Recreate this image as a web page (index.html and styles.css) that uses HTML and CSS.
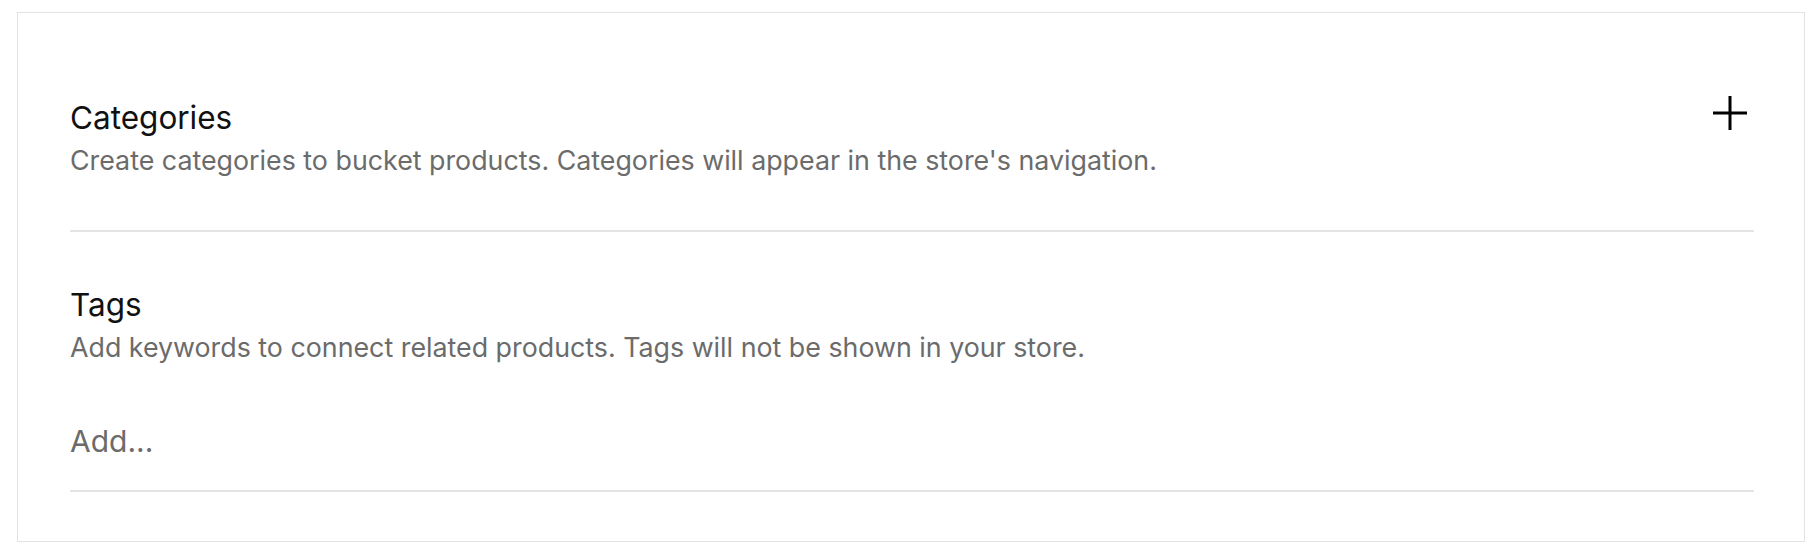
FILE: index.html
```html
<!DOCTYPE html>
<html lang="en">
<head>
    <meta charset="UTF-8">
    <title>Product organization</title>
    <link rel="stylesheet" href="styles.css">
</head>
<body>
    <div class="panel">
        <div class="section">
            <div class="section-head">
                <div class="section-text">
                    <div class="title">Categories</div>
                    <div class="desc">Create categories to bucket products. Categories will appear in the store's navigation.</div>
                </div>
                <button class="add-btn" type="button" aria-label="Add category">
                    <svg width="36" height="36" viewBox="0 0 36 36">
                        <path d="M18 1v34M1 18h34" stroke="#000" stroke-width="3" fill="none"/>
                    </svg>
                </button>
            </div>
        </div>

        <div class="section tags">
            <div class="title">Tags</div>
            <div class="desc">Add keywords to connect related products. Tags will not be shown in your store.</div>
            <input class="tag-input" type="text" placeholder="Add...">
        </div>
    </div>
</body>
</html>
```

FILE: styles.css
```css
/* base */
body{
    margin: 0;
    background: #fff;
    font-family: "Inter", "Noto Sans", sans-serif;
}

/* outer panel */
.panel{
    margin: 12px 13px 0 17px;
    border: 1px solid #e3e3e3;
    padding: 0 50px 49px 52px;
}

.section{
    border-bottom: 2px solid #e4e4e4;
}

.section-head{
    display: flex;
    justify-content: space-between;
    align-items: flex-start;
    padding: 85px 0 48px;
}

.title{
    font-size: 31.5px;
    line-height: 40px;
    color: #111;
}

.desc{
    font-size: 26.8px;
    line-height: 44px;
    color: #6b6b6b;
}

/* plus button */
.add-btn{
    width: 48px;
    height: 48px;
    margin-top: -9px;
    padding: 0;
    border: 0;
    background: none;
    display: flex;
    align-items: center;
    justify-content: center;
    cursor: pointer;
}

.tags{
    padding-top: 53px;
}

.tag-input{
    display: block;
    width: 100%;
    box-sizing: border-box;
    margin-top: 54px;
    padding: 0 0 31px;
    border: 0;
    outline: none;
    font-family: inherit;
    font-size: 30px;
    line-height: 36px;
    color: #111;
}

.tag-input::placeholder{
    color: #6b6b6b;
}
```
